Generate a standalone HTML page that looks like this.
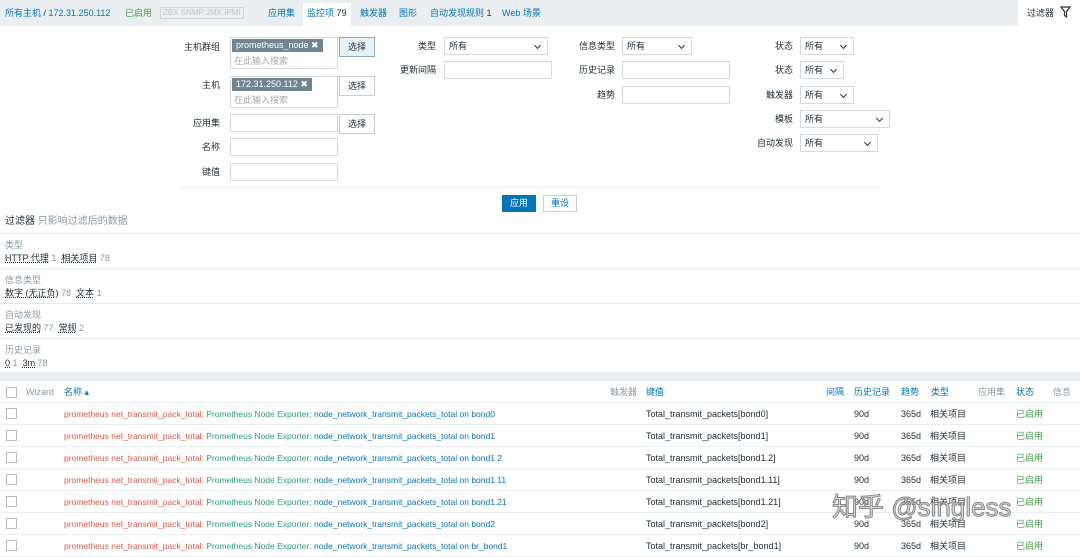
<!DOCTYPE html>
<html><head><meta charset="utf-8"><style>
*{margin:0;padding:0;box-sizing:border-box}
body{width:1080px;height:555px;overflow:hidden;background:#fff;font-family:"Liberation Sans","Noto Sans CJK SC",sans-serif;font-size:9px;line-height:12px;color:#1f2c33;position:relative}
.a{position:absolute;white-space:nowrap;line-height:12px}
.nav{position:absolute;left:0;top:0;width:1018px;height:26px;background:#ebeef0}
.l{color:#0275b8}
.g{color:#429e47}
.inp{position:absolute;border:1px solid #d3d9dc;background:#fff;height:18px}
.sel{position:absolute;border:1px solid #d3d9dc;background:#fff;height:18px;padding:2px 4px;font-size:9px;line-height:12px}
.sel:after{content:"";position:absolute;right:7px;top:5px;width:4px;height:4px;border-right:1px solid #333;border-bottom:1px solid #333;transform:rotate(45deg)}
.btn{position:absolute;border:1px solid #c5ced3;background:#fff;height:20px;font-size:9px;text-align:center;line-height:18px}
.tag{position:absolute;background:#708592;color:#fff;height:13px;padding:0 4px;font-size:9px;line-height:13px}
.lab{position:absolute;text-align:right;font-size:9px}
.ph{position:absolute;color:#aaa;font-size:9px}
.row{position:absolute;left:0;width:1080px;height:22px;border-bottom:1px solid #ebeef0}
.cb{position:absolute;left:6px;width:11px;height:11px;border:1px solid #bbb;background:#fff}
.sec{position:absolute;left:0;width:1080px;border-top:1px solid #e6e9eb}
.gr{color:#8b9aa2}
u{text-decoration:underline dotted}
</style></head><body>
<div class="nav"></div>
<div class="a l" style="left:5px;top:7px">所有主机 <span style="color:#333">/</span> 172.31.250.112</div>
<div class="a g" style="left:125px;top:7px">已启用</div>
<div class="a" style="left:160px;top:7px;border:1px solid #d0d6d9;color:#c0c8cc;padding:0 2px;font-size:8px;line-height:10px">ZBX SNMP JMX IPMI</div>
<div class="a l" style="left:268px;top:7px">应用集</div>
<div class="a" style="left:303px;top:3px;background:#fff;height:23px;padding:4px 4px;"><span class="l">监控项</span> 79</div>
<div class="a l" style="left:360px;top:7px">触发器</div>
<div class="a l" style="left:399px;top:7px">图形</div>
<div class="a l" style="left:430px;top:7px">自动发现规则 <span style="color:#333">1</span></div>
<div class="a l" style="left:502px;top:7px">Web 场景</div>
<div class="a" style="left:1027px;top:7px">过滤器</div>
<svg class="a" style="left:1060px;top:6px" width="11" height="12" viewBox="0 0 11 12"><path d="M1 1H10L6.5 5.5V11L4.5 9.5V5.5Z" fill="none" stroke="#333" stroke-width="1.2"/></svg>

<div class="lab" style="left:160px;width:60px;top:41px">主机群组</div>
<div class="inp" style="left:230px;top:37px;width:108px;height:32px"></div>
<div class="tag" style="left:232px;top:39px">prometheus_node ✖</div>
<div class="ph" style="left:234px;top:55px">在此输入搜索</div>
<div class="btn" style="left:339px;top:37px;width:36px;background:#e8f1f8;border-color:#8ab">选择</div>
<div class="lab" style="left:160px;width:60px;top:79px">主机</div>
<div class="inp" style="left:230px;top:76px;width:108px;height:32px"></div>
<div class="tag" style="left:232px;top:78px">172.31.250.112 ✖</div>
<div class="ph" style="left:234px;top:94px">在此输入搜索</div>
<div class="btn" style="left:339px;top:76px;width:36px">选择</div>
<div class="lab" style="left:160px;width:60px;top:117px">应用集</div>
<div class="inp" style="left:230px;top:114px;width:108px"></div>
<div class="btn" style="left:339px;top:114px;width:36px">选择</div>
<div class="lab" style="left:160px;width:60px;top:141px">名称</div>
<div class="inp" style="left:230px;top:138px;width:108px"></div>
<div class="lab" style="left:160px;width:60px;top:166px">键值</div>
<div class="inp" style="left:230px;top:163px;width:108px"></div>

<div class="lab" style="left:380px;width:56px;top:40px">类型</div>
<div class="sel" style="left:444px;top:37px;width:104px">所有</div>
<div class="lab" style="left:380px;width:56px;top:64px">更新间隔</div>
<div class="inp" style="left:444px;top:61px;width:108px"></div>
<div class="lab" style="left:560px;width:55px;top:40px">信息类型</div>
<div class="sel" style="left:622px;top:37px;width:70px">所有</div>
<div class="lab" style="left:560px;width:55px;top:64px">历史记录</div>
<div class="inp" style="left:622px;top:61px;width:108px"></div>
<div class="lab" style="left:560px;width:55px;top:89px">趋势</div>
<div class="inp" style="left:622px;top:86px;width:108px"></div>

<div class="lab" style="left:730px;width:63px;top:40px">状态</div>
<div class="sel" style="left:800px;top:37px;width:54px">所有</div>
<div class="lab" style="left:730px;width:63px;top:64px">状态</div>
<div class="sel" style="left:800px;top:61px;width:44px">所有</div>
<div class="lab" style="left:730px;width:63px;top:89px">触发器</div>
<div class="sel" style="left:800px;top:86px;width:54px">所有</div>
<div class="lab" style="left:730px;width:63px;top:113px">模板</div>
<div class="sel" style="left:800px;top:110px;width:90px">所有</div>
<div class="lab" style="left:730px;width:63px;top:137px">自动发现</div>
<div class="sel" style="left:800px;top:134px;width:78px">所有</div>

<div class="a" style="left:180px;top:187px;width:700px;border-top:1px solid #eef0f1"></div>
<div class="btn" style="left:502px;top:195px;width:34px;height:17px;line-height:15px;background:#0275b8;border-color:#0275b8;color:#fff">应用</div>
<div class="btn" style="left:543px;top:195px;width:34px;height:17px;line-height:15px;color:#0275b8">重设</div>

<div class="a" style="left:5px;top:216px;font-size:10px">过滤器 <span class="gr">只影响过滤后的数据</span></div>
<div class="sec" style="top:233px;height:36px"><div class="a gr" style="left:5px;top:5px">类型</div><div class="a" style="left:5px;top:18px"><u>HTTP 代理</u> <span class="gr">1</span> &nbsp;<u>相关项目</u> <span class="gr">78</span></div></div>
<div class="sec" style="top:268px;height:36px"><div class="a gr" style="left:5px;top:5px">信息类型</div><div class="a" style="left:5px;top:18px"><u>数字 (无正负)</u> <span class="gr">78</span> &nbsp;<u>文本</u> <span class="gr">1</span></div></div>
<div class="sec" style="top:303px;height:36px"><div class="a gr" style="left:5px;top:5px">自动发现</div><div class="a" style="left:5px;top:18px"><u>已发现的</u> <span class="gr">77</span> &nbsp;<u>常规</u> <span class="gr">2</span></div></div>
<div class="sec" style="top:338px;height:36px"><div class="a gr" style="left:5px;top:5px">历史记录</div><div class="a" style="left:5px;top:18px"><u>0</u> <span class="gr">1</span> &nbsp;<u>3m</u> <span class="gr">78</span></div></div>
<div class="a" style="left:0;top:372px;width:1080px;height:9px;background:#ebeef0"></div>

<div class="row" style="top:381px">
<div class="cb" style="top:6px"></div>
<div class="a gr" style="left:26px;top:5px">Wizard</div>
<div class="a l" style="left:64px;top:5px">名称 ▴</div>
<div class="a gr" style="left:610px;top:5px">触发器</div>
<div class="a l" style="left:646px;top:5px">键值</div>
<div class="a l" style="left:826px;top:5px">间隔</div>
<div class="a l" style="left:854px;top:5px">历史记录</div>
<div class="a l" style="left:901px;top:5px">趋势</div>
<div class="a l" style="left:931px;top:5px">类型</div>
<div class="a gr" style="left:978px;top:5px">应用集</div>
<div class="a l" style="left:1016px;top:5px">状态</div>
<div class="a gr" style="left:1053px;top:5px">信息</div>
</div>
<div id="rows"></div>
<script>
var b=["bond0","bond1","bond1.2","bond1.11","bond1.21","bond2","br_bond1"],b2=["bond0","bond1","bond1 2","bond1 11","bond1.21","bond2","br_bond1"],h="";
for(var i=0;i<7;i++){var t=403+i*22;h+='<div class="row" style="top:'+t+'px"><div class="cb" style="top:5px"></div><div class="a" style="left:64px;top:5px;font-size:8.5px"><span style="color:#e0584a">prometheus net_transmit_pack_total:</span> <span style="color:#2b9e86">Prometheus Node Exporter:</span> <span class="l">node_network_transmit_packets_total on '+b2[i]+'</span></div><div class="a" style="left:646px;top:5px">Total_transmit_packets['+b[i]+']</div><div class="a" style="left:854px;top:5px">90d</div><div class="a" style="left:901px;top:5px">365d</div><div class="a" style="left:930px;top:5px">相关项目</div><div class="a g" style="left:1016px;top:5px">已启用</div></div>';}
document.getElementById("rows").innerHTML=h;
</script>
<div class="a" style="left:832px;top:492px;font-size:26px;line-height:30px;color:rgba(200,200,200,.6);-webkit-text-stroke:1px #888">知乎 @singless</div>
</body></html>
